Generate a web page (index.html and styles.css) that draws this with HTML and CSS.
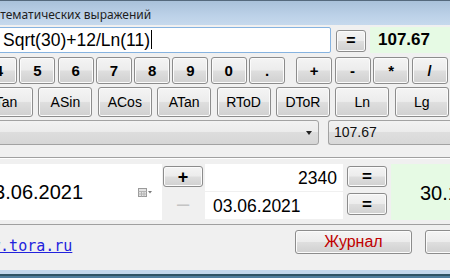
FILE: index.html
```html
<!DOCTYPE html>
<html lang="ru">
<head>
    <meta charset="UTF-8">
    <title>Калькулятор математических выражений</title>
    <link rel="stylesheet" href="styles.css">
</head>
<body>
    <div class="window">
        <div class="titlebar"><span class="title">Калькулятор математических выражений</span></div>

        <div class="client">
            <!-- Expression line -->
            <div class="row expr-row">
                <div class="expr">Sqrt(30)+12/Ln(11)<span class="caret"></span></div>
                <button class="btn eq-btn">=</button>
                <div class="result">107.67</div>
            </div>

            <!-- Digits and operators -->
            <div class="row keys">
                <div class="digits">
                    <button class="btn key">4</button>
                    <button class="btn key">5</button>
                    <button class="btn key">6</button>
                    <button class="btn key">7</button>
                    <button class="btn key">8</button>
                    <button class="btn key">9</button>
                    <button class="btn key">0</button>
                    <button class="btn key">.</button>
                </div>
                <div class="ops">
                    <button class="btn key">+</button>
                    <button class="btn key">-</button>
                    <button class="btn key">*</button>
                    <button class="btn key">/</button>
                </div>
            </div>

            <!-- Functions -->
            <div class="row funcs">
                <button class="btn fn">Tan</button>
                <button class="btn fn">ASin</button>
                <button class="btn fn">ACos</button>
                <button class="btn fn">ATan</button>
                <button class="btn fn">RToD</button>
                <button class="btn fn">DToR</button>
                <button class="btn fn">Ln</button>
                <button class="btn fn">Lg</button>
            </div>

            <!-- History -->
            <div class="row combo-row">
                <div class="combo"><span class="arrow"></span></div>
                <div class="memo">107.67</div>
            </div>

            <!-- Date calculator -->
            <div class="group">
                <div class="datepick">
                    <span class="date-text">03.06.2021</span>
                    <span class="cal-icon">
                        <svg width="14" height="10" viewBox="0 0 14 10">
                            <rect x="0.5" y="0.5" width="8" height="8" fill="#e4e4e4" stroke="#9a9a9a"/>
                            <path d="M0.5 3.5h8M3.5 3.5v5M6 3.5v5M0.5 6h8" stroke="#b4b4b4" fill="none"/>
                            <path d="M10 3h4l-2 2.5z" fill="#7a7a7a"/>
                        </svg>
                    </span>
                </div>
                <div class="pm">
                    <button class="btn pm-btn">+</button>
                    <button class="btn pm-btn disabled">–</button>
                </div>
                <div class="fields">
                    <div class="field num">2340</div>
                    <div class="field">03.06.2021</div>
                </div>
                <div class="eqs">
                    <button class="btn eq-small">=</button>
                    <button class="btn eq-small">=</button>
                </div>
                <div class="date-result">30.10.2027</div>
            </div>

            <!-- Footer -->
            <div class="footer">
                <a class="site" href="#">www.tora.ru</a>
                <button class="btn log-btn">Журнал</button>
                <button class="btn log-btn">Выход</button>
            </div>
        </div>
        <div class="frame-bottom"></div>
    </div>
</body>
</html>
```

FILE: styles.css
```css
html, body {
    margin: 0;
    padding: 0;
    overflow: hidden;
}
body {
    width: 450px;
    height: 278px;
    font-family: "Liberation Sans", Arial, sans-serif;
    background-color: #f0f0f0;
}
.window {
    width: 450px;
    height: 278px;
    display: flex;
    flex-direction: column;
}
.titlebar {
    height: 25px;
    border-top: 1px solid #55697d;
    box-sizing: border-box;
    background: linear-gradient(#a9c1da, #bcd1e8 60%, #c6d9ed);
    white-space: nowrap;
    overflow: hidden;
}
.title {
    display: inline-block;
    margin-left: -92px;
    margin-top: 5px;
    font-family: "Noto Sans", sans-serif;
    font-size: 12px;
    color: #1e1e1e;
}
.client {
    flex: 1;
    display: flex;
    flex-direction: column;
    background-color: #f0f0f0;
}
.row {
    display: flex;
    white-space: nowrap;
}

/* buttons */
.btn {
    font-family: "Liberation Sans", Arial, sans-serif;
    border: 1px solid #8c8c8c;
    border-radius: 3px;
    background: linear-gradient(#f4f4f4 0%, #ececec 48%, #dedede 52%, #d0d0d0 100%);
    box-shadow: inset 0 0 0 1px #fbfbfb;
    color: #000;
    padding: 0;
    cursor: pointer;
    flex-shrink: 0;
}

.expr-row {
    margin-top: 2px;
    height: 26px;
    align-items: stretch;
}
.expr {
    margin-left: -10px;
    width: 341px;
    box-sizing: border-box;
    border: 1px solid #86b3e0;
    border-radius: 2px;
    background-color: #fff;
    font-size: 17.5px;
    line-height: 24px;
    padding-left: 12px;
    color: #000;
}
.caret {
    display: inline-block;
    width: 1px;
    height: 19px;
    background-color: #000;
    vertical-align: -3px;
    margin-left: 1px;
}
.eq-btn {
    width: 30px;
    height: 22px;
    margin: 3px 0 0 5px;
    font-size: 16px;
    font-weight: bold;
}
.result {
    margin-left: 4px;
    flex: 1;
    background-color: #e6fae4;
    font-size: 17px;
    font-weight: bold;
    line-height: 26px;
    padding-left: 8px;
}

.keys {
    margin-top: 4px;
    height: 27px;
}
.digits, .ops {
    display: flex;
    gap: 2.3px;
}
.digits {
    margin-left: -19px;
}
.ops {
    margin-left: 11px;
    gap: 2.5px;
}
.key {
    width: 36px;
    height: 27px;
    font-size: 15px;
    font-weight: bold;
}

.funcs {
    margin-top: 3px;
    gap: 5.4px;
    margin-left: -21px;
}
.fn {
    width: 54px;
    height: 30px;
    font-size: 14px;
}

.combo-row {
    margin-top: 3px;
    height: 25px;
}
.combo {
    margin-left: -10px;
    width: 329px;
    box-sizing: border-box;
    border: 1px solid #a2a2a2;
    border-radius: 3px;
    background: linear-gradient(#f2f2f2 0%, #ebebeb 50%, #dddddd 50%, #d6d6d6 100%);
    position: relative;
}
.arrow {
    position: absolute;
    right: 6px;
    top: 10px;
    border-left: 3px solid transparent;
    border-right: 3px solid transparent;
    border-top: 4px solid #222;
}
.memo {
    margin-left: 9px;
    flex: 1;
    border: 1px solid #a2a2a2;
    border-right: none;
    border-radius: 3px 0 0 3px;
    background: linear-gradient(#f2f2f2 0%, #ebebeb 50%, #dedede 50%, #d8d8d8 100%);
    font-size: 14px;
    line-height: 23px;
    padding-left: 5px;
    color: #111;
}

.group {
    margin-top: 12px;
    border-top: 1px solid #a0a0a0;
    border-bottom: 1px solid #a0a0a0;
    box-shadow: inset 0 1px 0 #fff;
    height: 68px;
    display: flex;
    align-items: flex-start;
    padding-top: 6px;
    box-sizing: border-box;
    white-space: nowrap;
}
.datepick {
    margin-left: -20px;
    width: 182px;
    height: 56px;
    background-color: #fff;
    display: flex;
    align-items: center;
    justify-content: space-between;
    padding: 0 10px 0 3px;
    box-sizing: border-box;
    flex-shrink: 0;
}
.date-text {
    font-size: 20px;
}
.cal-icon {
    display: flex;
    margin-top: 1px;
}
.pm {
    display: flex;
    flex-direction: column;
    gap: 4px;
    margin: 2px 0 0 1px;
}
.pm-btn {
    width: 40px;
    height: 21px;
    font-size: 18px;
    font-weight: bold;
    line-height: 18px;
}
.pm-btn.disabled {
    border: none;
    background: none;
    box-shadow: none;
    color: #c4c4c4;
    height: 25px;
    font-size: 22px;
    font-weight: normal;
}
.fields {
    display: flex;
    flex-direction: column;
    gap: 1px;
    margin-left: 2px;
}
.field {
    width: 138px;
    height: 27px;
    background-color: #fff;
    font-size: 17.5px;
    line-height: 28px;
    padding: 0 6px 0 8px;
    box-sizing: border-box;
}
.field.num {
    text-align: right;
}
.eqs {
    display: flex;
    flex-direction: column;
    gap: 6px;
    margin: 2px 0 0 4px;
}
.eq-small {
    width: 40px;
    height: 21px;
    font-size: 17px;
    font-weight: bold;
    line-height: 17px;
}
.eqs .eq-small:last-child {
    height: 22px;
}
.date-result {
    margin-left: 4px;
    width: 160px;
    height: 56px;
    flex-shrink: 0;
    background-color: #e6fae4;
    font-size: 20px;
    line-height: 58px;
    padding-left: 29px;
    box-sizing: border-box;
}

.footer {
    height: 38px;
    display: flex;
    align-items: flex-start;
    padding-top: 5px;
    box-sizing: border-box;
    white-space: nowrap;
}
.site {
    margin-left: -27px;
    margin-top: 7px;
    font-family: "DejaVu Sans Mono", "Liberation Mono", monospace;
    font-size: 15px;
    color: #2222dd;
    width: 322px;
    flex-shrink: 0;
}
.log-btn {
    width: 117px;
    height: 24px;
    font-size: 16px;
    color: #c00000;
    margin-right: 13px;
}
.frame-bottom {
    height: 8px;
    background: linear-gradient(#c2d8ec 0%, #c2d8ec 55%, #2f5566 55%, #2f5566 70%, #4f7f9e 70%);
}
```
